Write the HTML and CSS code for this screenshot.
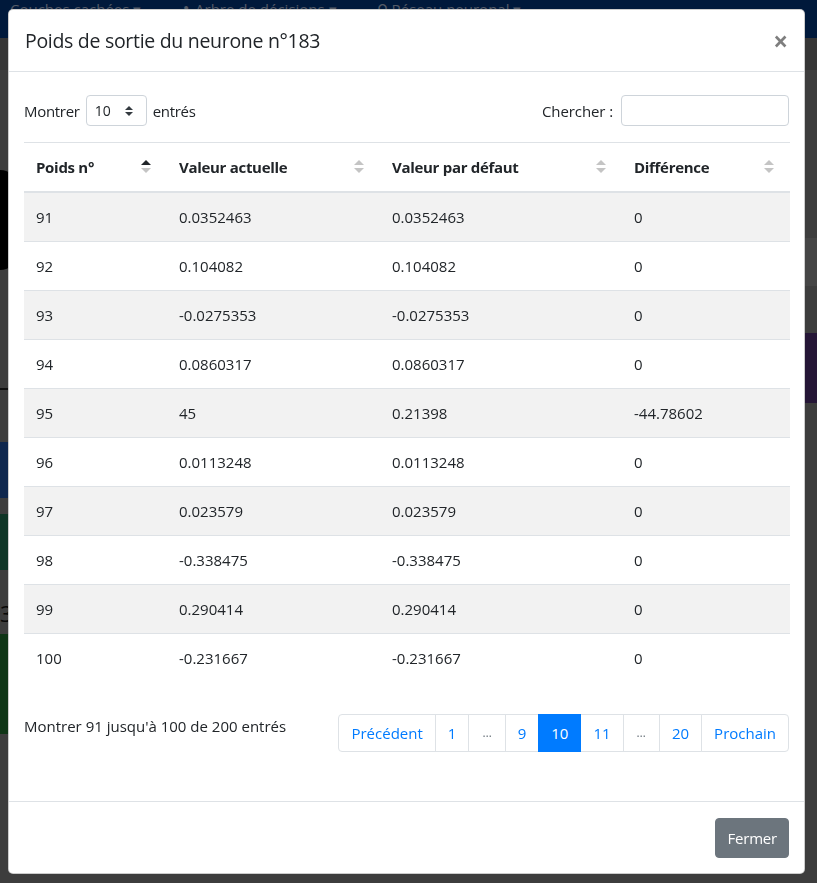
FILE: index.html
```html
<!DOCTYPE html>
<html lang="fr">
<head>
<meta charset="utf-8">
<title>Poids de sortie</title>
<link rel="stylesheet" href="styles.css">
</head>
<body>
<div class="page">
  <nav class="navbar">
    <span class="nav-item">Couches cachées ▾</span>
    <span class="nav-item">♣ Arbre de décisions ▾</span>
    <span class="nav-item">⚲ Réseau neuronal ▾</span>
  </nav>
  <div class="subbar"></div>
  <div class="page-body">
    <div class="side">
      <div class="blob"></div>
      <div class="line"></div>
      <div class="block blue"></div>
      <div class="block green"></div>
      <div class="digit">3</div>
      <div class="block green2"></div>
    </div>
    <div class="rside">
      <div class="band"></div>
      <div class="purple"></div>
    </div>
  </div>
</div>

<div class="backdrop"></div>

<div class="modal">
  <div class="dialog">
    <div class="m-header">
      <h5 class="m-title">Poids de sortie du neurone n°183</h5>
      <button class="close" type="button">×</button>
    </div>
    <div class="m-body">
      <div class="top-row">
        <label class="length">Montrer
          <span class="select">10
            <svg class="sel-arrows" width="8" height="10" viewBox="0 0 8 10"><path d="M4 0 L8 4 H0 Z M4 10 L0 6 H8 Z" fill="#343a40"/></svg>
          </span>
          entrés</label>
        <label class="search">Chercher : <span class="input"></span></label>
      </div>
      <table class="grid">
        <colgroup>
          <col class="c1"><col class="c2"><col class="c3"><col class="c4">
        </colgroup>
        <thead>
          <tr>
            <th><span>Poids n°</span><i class="sort asc"></i></th>
            <th><span>Valeur actuelle</span><i class="sort"></i></th>
            <th><span>Valeur par défaut</span><i class="sort"></i></th>
            <th><span>Différence</span><i class="sort"></i></th>
          </tr>
        </thead>
        <tbody>
          <tr><td>91</td><td>0.0352463</td><td>0.0352463</td><td>0</td></tr>
          <tr><td>92</td><td>0.104082</td><td>0.104082</td><td>0</td></tr>
          <tr><td>93</td><td>-0.0275353</td><td>-0.0275353</td><td>0</td></tr>
          <tr><td>94</td><td>0.0860317</td><td>0.0860317</td><td>0</td></tr>
          <tr><td>95</td><td>45</td><td>0.21398</td><td>-44.78602</td></tr>
          <tr><td>96</td><td>0.0113248</td><td>0.0113248</td><td>0</td></tr>
          <tr><td>97</td><td>0.023579</td><td>0.023579</td><td>0</td></tr>
          <tr><td>98</td><td>-0.338475</td><td>-0.338475</td><td>0</td></tr>
          <tr><td>99</td><td>0.290414</td><td>0.290414</td><td>0</td></tr>
          <tr><td>100</td><td>-0.231667</td><td>-0.231667</td><td>0</td></tr>
        </tbody>
      </table>
      <div class="bottom-row">
        <div class="info">Montrer 91 jusqu'à 100 de 200 entrés</div>
        <ul class="pagination">
          <li class="pg"><a>Précédent</a></li>
          <li class="pg"><a>1</a></li>
          <li class="pg disabled"><a>…</a></li>
          <li class="pg"><a>9</a></li>
          <li class="pg active"><a>10</a></li>
          <li class="pg"><a>11</a></li>
          <li class="pg disabled"><a>…</a></li>
          <li class="pg"><a>20</a></li>
          <li class="pg"><a>Prochain</a></li>
        </ul>
      </div>
    </div>
    <div class="m-footer">
      <button class="btn" type="button">Fermer</button>
    </div>
  </div>
</div>
</body>
</html>
```

FILE: styles.css
```css
* { box-sizing: border-box; }
html, body { margin: 0; padding: 0; }
body {
  width: 817px;
  height: 883px;
  overflow: hidden;
  background: #7a7a7a;
  font-family: "Open Sans", "Noto Sans", sans-serif;
  font-size: 16px;
  color: #212529;
}

/* page behind the modal */
.page { height: 883px; display: flex; flex-direction: column; }
.navbar {
  height: 38px;
  background: #013377;
  display: flex;
  gap: 40px;
  padding: 0 0 0 10px;
  color: #a7b4cc;
  font-size: 15px;
  line-height: 18px;
}
.subbar { height: 32px; background: #6a6a6a; }
.page-body { flex: 1; display: flex; justify-content: space-between; background: #7b7b7b; }
.side { width: 20px; display: flex; flex-direction: column; }
.blob { height: 100px; margin-top: 100px; background: #000; border-radius: 0 60px 60px 0; width: 18px; }
.line { height: 2px; margin-top: 118px; background: #222; }
.block { width: 20px; }
.blue { height: 56px; margin-top: 52px; background: #1f4f9a; }
.green { height: 56px; margin-top: 16px; background: #1f6b4d; }
.digit { color: #111; font-size: 22px; line-height: 30px; margin-top: 28px; }
.green2 { height: 100px; margin-top: 6px; background: #1e6a2c; }
.rside { width: 14px; display: flex; flex-direction: column; }
.band { height: 48px; margin-top: 168px; background: #8a8a8a; }
.purple { height: 70px; margin-top: 47px; background: #4b2c6c; }

.backdrop {
  position: fixed;
  inset: 0;
  background: rgba(0, 0, 0, 0.5);
}

/* modal */
.modal {
  position: fixed;
  inset: 0;
}
.dialog {
  margin: 9px 0 0 8px;
  width: 797px;
  background: #fff;
  border-radius: 5px;
  border: 1px solid rgba(0,0,0,.2);
}
.m-header {
  display: flex;
  align-items: flex-start;
  justify-content: space-between;
  padding: 16px 15px 15px;
  border-bottom: 1px solid #dee2e6;
}
.m-title {
  margin: 0;
  font-size: 19.5px;
  line-height: 30px;
  font-weight: 500;
  letter-spacing: -0.3px;
  padding-left: 1px;
}
.close {
  background: none;
  border: 0;
  padding: 0;
  margin: 0 1px 0 0;
  font-family: "Open Sans", sans-serif;
  font-size: 26px;
  line-height: 30px;
  font-weight: 700;
  color: #000;
  opacity: .5;
}

.m-body { padding: 15px 15px 49px 15px; }

.top-row {
  margin-top: 8px;
  display: flex;
  justify-content: space-between;
  align-items: center;
  height: 31px;
  margin-bottom: 16px;
  font-size: 15px;
}
.length, .search { display: flex; align-items: center; gap: 5px; font-weight: 400; }
.length { letter-spacing: -0.3px; }
.search { letter-spacing: -0.1px; }
.select {
  display: flex;
  align-items: center;
  justify-content: space-between;
  width: 61px;
  height: 31px;
  border: 1px solid #ced4da;
  border-radius: 4px;
  padding: 0 13px 0 8px;
  font-size: 14px;
  letter-spacing: 0;
  margin: 0 1px;
}
.input {
  display: block;
  width: 168px;
  height: 31px;
  border: 1px solid #ced4da;
  border-radius: 4px;
  margin-left: 3px;
}

.grid {
  width: 766px;
  border-collapse: collapse;
  table-layout: fixed;
}
.c1 { width: 143px; }
.c2 { width: 213px; }
.c3 { width: 242px; }
.c4 { width: 168px; }
.grid th, .grid td {
  padding: 12px 12px;
  line-height: 24px;
  text-align: left;
  border-top: 1px solid #dee2e6;
  white-space: nowrap;
}
.grid th {
  position: relative;
  font-weight: 700;
  font-size: 15px;
  letter-spacing: -0.3px;
  border-bottom: 2px solid #dee2e6;
}
.grid tbody tr:nth-child(odd) { background: #f2f2f2; }
.grid td { font-size: 15px; }

.sort {
  position: absolute;
  right: 16px;
  top: 17px;
  width: 10px;
  height: 13px;
}
.sort::before, .sort::after {
  content: "";
  position: absolute;
  left: 0;
  border-left: 5px solid transparent;
  border-right: 5px solid transparent;
}
.sort::before { top: 0; border-bottom: 5px solid #c4c4c4; }
.sort::after { bottom: 0; border-top: 5px solid #c4c4c4; }
.sort.asc::before { border-bottom-color: #212529; }

.bottom-row {
  margin-top: 32px;
  display: flex;
  justify-content: space-between;
  align-items: flex-start;
}
.info { line-height: 24px; font-size: 15px; }
.pagination {
  display: flex;
  list-style: none;
  margin: 0;
  padding: 0;
}
.pg a {
  display: block;
  padding: 8px 12px;
  line-height: 20px;
  font-size: 15px;
  color: #007bff;
  border: 1px solid #dee2e6;
  margin-left: -1px;
  background: #fff;
}
.pg:first-child a { border-radius: 4px 0 0 4px; margin-left: 0; }
.pg:last-child a { border-radius: 0 4px 4px 0; }
.pg.active a { background: #007bff; border-color: #007bff; color: #fff; position: relative; }
.pg.disabled a { color: #6c757d; font-size: 12px; padding-left: 13px; padding-right: 13px; line-height: 20px; }

.m-footer {
  display: flex;
  justify-content: flex-end;
  padding: 16px 15px 15px;
  border-top: 1px solid #dee2e6;
}
.btn {
  font-family: inherit;
  font-size: 15px;
  line-height: 24px;
  padding: 7px 11px;
  background: #6c757d;
  color: #fff;
  border: 1px solid #6c757d;
  border-radius: 4px;
  letter-spacing: -0.2px;
}
```
